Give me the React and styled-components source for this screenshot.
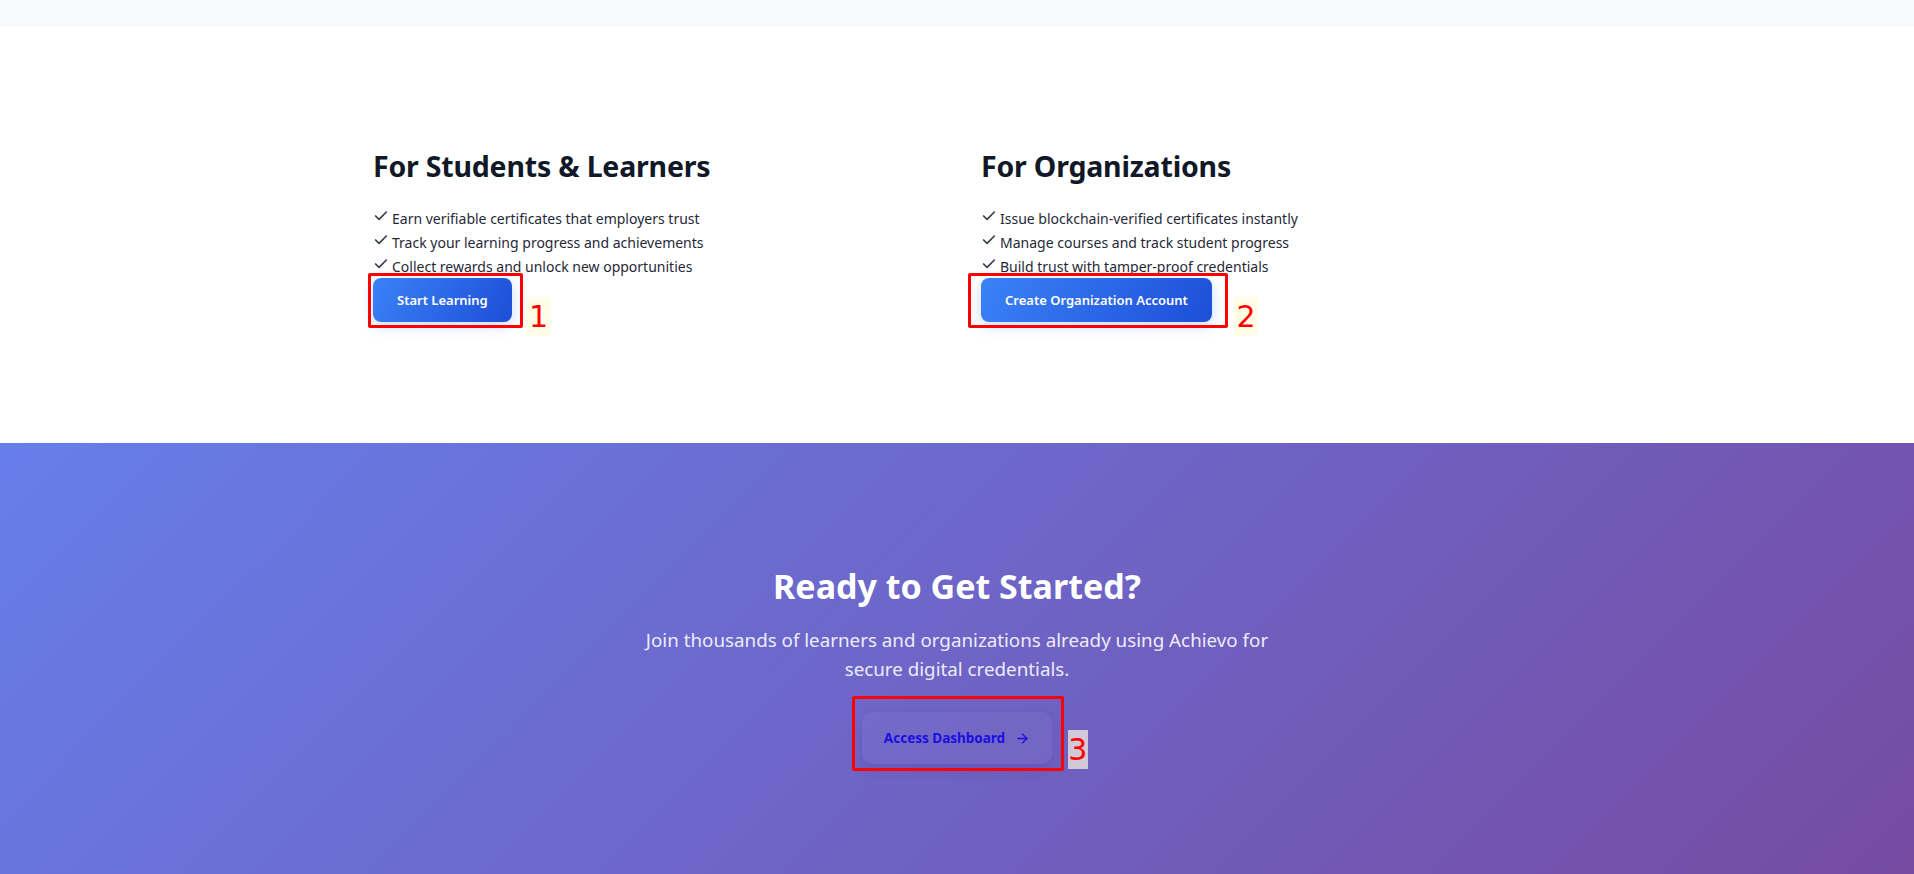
import React from "react";
import styled, { createGlobalStyle } from "styled-components";
import { Check, ArrowRight } from "lucide-react";

const GlobalStyle = createGlobalStyle`
  html, body { margin: 0; padding: 0; }
  body {
    font-family: "Noto Sans", "Open Sans", sans-serif;
    background: #ffffff;
    -webkit-font-smoothing: antialiased;
  }
  * { box-sizing: border-box; }
`;

const Page = styled.div`
  width: 100%;
  min-height: 874px;
  overflow: hidden;
`;

const TopStrip = styled.div`
  height: 27px;
  background: #f8f9fb;
`;

const RolesSection = styled.section`
  background: #ffffff;
  padding: 121px 24px 121px;
`;

const RolesGrid = styled.div`
  max-width: 1168px;
  margin: 0 auto;
  display: grid;
  grid-template-columns: 1fr 1fr;
  column-gap: 48px;
`;

const RoleCard = styled.div`
  display: flex;
  flex-direction: column;
  align-items: flex-start;
`;

const RoleTitle = styled.h2`
  margin: 0 0 23px;
  font-size: 28.5px;
  line-height: 36px;
  font-weight: 700;
  color: #111827;
  letter-spacing: -0.2px;
`;

const FeatureList = styled.ul`
  list-style: none;
  margin: 0;
  padding: 0;
  display: flex;
  flex-direction: column;
`;

const FeatureItem = styled.li`
  display: flex;
  align-items: center;
  gap: 3px;
  font-size: 14px;
  line-height: 23.8px;
  color: #1f2937;
  svg {
    flex: none;
    color: #374151;
    margin-top: -5px;
  }
`;

const Anchor = styled.div`
  position: relative;
  display: inline-flex;
`;

const PrimaryButton = styled.button`
  border: none;
  cursor: pointer;
  height: 44px;
  padding: 0 24px;
  border-radius: 8px;
  background: linear-gradient(120deg, #3b82f6 0%, #1d4ed8 100%);
  color: #ffffff;
  font-family: inherit;
  font-size: 13px;
  font-weight: 600;
  box-shadow: 0 4px 14px rgba(59, 130, 246, 0.28);
`;

const MarkBox = styled.div`
  position: absolute;
  left: ${(p) => p.$l}px;
  top: ${(p) => p.$t}px;
  width: ${(p) => p.$w}px;
  height: ${(p) => p.$h}px;
  border: 3px solid #ff0000;
  border-radius: 2px;
  pointer-events: none;
`;

const MarkLabel = styled.div`
  position: absolute;
  left: ${(p) => p.$l}px;
  top: ${(p) => p.$t}px;
  width: ${(p) => p.$w}px;
  height: 39px;
  background: ${(p) => p.$bg || "#fffde6"};
  color: #ff0000;
  font-family: "DejaVu Sans", sans-serif;
  font-size: 30px;
  line-height: 39px;
  text-align: center;
  pointer-events: none;
`;

const CtaSection = styled.section`
  background: linear-gradient(135deg, #667eea 0%, #764ba2 100%);
  padding: 122px 24px 120px;
  display: flex;
  flex-direction: column;
  align-items: center;
  text-align: center;
`;

const CtaTitle = styled.h2`
  margin: 0 0 19px;
  font-size: 34px;
  line-height: 42px;
  font-weight: 700;
  color: #ffffff;
`;

const CtaText = styled.p`
  margin: 0 0 28px;
  max-width: 640px;
  font-size: 18.8px;
  line-height: 29px;
  color: rgba(255, 255, 255, 0.9);
`;

const GhostButton = styled.button`
  display: inline-flex;
  align-items: center;
  gap: 10px;
  height: 52px;
  padding: 0 22px;
  border: none;
  border-radius: 10px;
  cursor: pointer;
  background: rgba(255, 255, 255, 0.035);
  color: #1a0fe0;
  font-family: inherit;
  font-size: 13.5px;
  font-weight: 700;
  box-shadow: 0 6px 12px rgba(60, 40, 140, 0.16);
`;

const students = [
  "Earn verifiable certificates that employers trust",
  "Track your learning progress and achievements",
  "Collect rewards and unlock new opportunities",
];

const orgs = [
  "Issue blockchain-verified certificates instantly",
  "Manage courses and track student progress",
  "Build trust with tamper-proof credentials",
];

function Role({ title, items, button, mark }) {
  return (
    <RoleCard>
      <RoleTitle>{title}</RoleTitle>
      <FeatureList>
        {items.map((t) => (
          <FeatureItem key={t}>
            <Check size={16} strokeWidth={2.6} />
            {t}
          </FeatureItem>
        ))}
      </FeatureList>
      <Anchor>
        <PrimaryButton>{button}</PrimaryButton>
        <MarkBox {...mark.box} />
        <MarkLabel {...mark.label}>{mark.n}</MarkLabel>
      </Anchor>
    </RoleCard>
  );
}

export default function App() {
  return (
    <Page>
      <GlobalStyle />
      <TopStrip />
      <RolesSection>
        <RolesGrid>
          <Role
            title="For Students & Learners"
            items={students}
            button="Start Learning"
            mark={{
              n: "1",
              box: { $l: -5, $t: -5, $w: 155, $h: 55 },
              label: { $l: 153, $t: 19, $w: 25 },
            }}
          />
          <Role
            title="For Organizations"
            items={orgs}
            button="Create Organization Account"
            mark={{
              n: "2",
              box: { $l: -13, $t: -5, $w: 260, $h: 55 },
              label: { $l: 253, $t: 19, $w: 24 },
            }}
          />
        </RolesGrid>
      </RolesSection>
      <CtaSection>
        <CtaTitle>Ready to Get Started?</CtaTitle>
        <CtaText>
          Join thousands of learners and organizations already using Achievo for
          secure digital credentials.
        </CtaText>
        <Anchor>
          <GhostButton>
            Access Dashboard
            <ArrowRight size={15} strokeWidth={2.2} />
          </GhostButton>
          <MarkBox $l={-10} $t={-16} $w={212} $h={75} />
          <MarkLabel $l={206} $t={18} $w={20} $bg="rgba(255,250,225,0.68)">
            3
          </MarkLabel>
        </Anchor>
      </CtaSection>
    </Page>
  );
}
